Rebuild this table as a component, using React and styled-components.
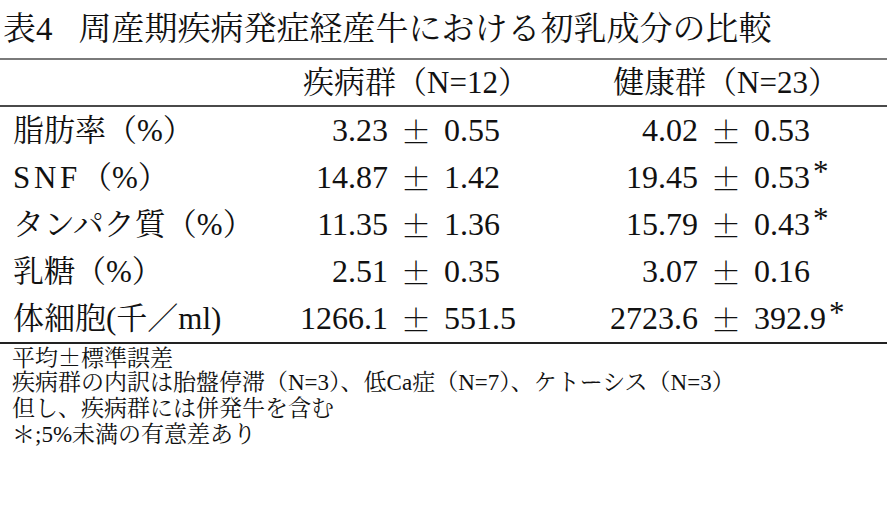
import React from "react";
import styled, { createGlobalStyle } from "styled-components";

const Global = createGlobalStyle`
  html, body { margin: 0; padding: 0; background: #fff; }
  body {
    font-family: "Liberation Serif", "Noto Serif CJK JP", "Noto Sans CJK JP", serif;
    color: #111;
  }
`;

const Page = styled.div`
  width: 887px;
  height: 514px;
  overflow: hidden;
  background: #fff;
`;

const Title = styled.div`
  height: 58px;
  line-height: 58px;
  font-size: 33px;
  padding-left: 3px;
  white-space: nowrap;
  border-bottom: 2px solid #7a7a7a;
`;

const Gap = styled.span`
  display: inline-block;
  width: 26px;
`;

const Table = styled.div`
  display: grid;
  grid-template-columns: 261px 127px 56px 127px 127px 56px 127px 1fr;
  border-bottom: 2px solid #222;
`;

const HeaderCell = styled.div`
  grid-column: ${(p) => p.$span};
  height: 45px;
  line-height: 45px;
  font-size: 31px;
  text-align: center;
  white-space: nowrap;
  border-bottom: 2px solid #4a4a4a;
`;

const HeaderFill = styled.div`
  grid-column: ${(p) => p.$span};
  border-bottom: 2px solid #4a4a4a;
`;

const Cell = styled.div`
  height: 47px;
  line-height: 47px;
  font-size: ${(p) => (p.$num ? "32px" : "31px")};
  white-space: nowrap;
  text-align: ${(p) => p.$align || "left"};
  padding-left: ${(p) => (p.$label ? "13px" : "0")};
`;

const PlusMinus = styled(Cell)`
  font-family: "Noto Serif CJK JP", "Noto Sans CJK JP", serif;
  font-size: 30px;
  text-align: center;
`;

const Latin = styled.span`
  letter-spacing: 0.12em;
`;

const Star = styled.span`
  font-size: 31px;
  position: relative;
  top: -6px;
  margin-left: 3px;
`;

const Notes = styled.div`
  padding-left: 12px;
  font-size: 23px;
`;

const Note = styled.div`
  height: 26px;
  line-height: 26px;
  white-space: nowrap;
`;

const Cjk = styled.span`
  font-family: "Noto Serif CJK JP", "Noto Sans CJK JP", serif;
`;

const rows = [
  { label: "脂肪率（%）", a: ["3.23", "0.55"], b: ["4.02", "0.53"], star: false },
  { label: <><Latin>SNF</Latin>（%）</>, a: ["14.87", "1.42"], b: ["19.45", "0.53"], star: true },
  { label: "タンパク質（%）", a: ["11.35", "1.36"], b: ["15.79", "0.43"], star: true },
  { label: "乳糖（%）", a: ["2.51", "0.35"], b: ["3.07", "0.16"], star: false },
  { label: "体細胞(千／ml)", a: ["1266.1", "551.5"], b: ["2723.6", "392.9"], star: true },
];

export default function App() {
  return (
    <Page>
      <Global />
      <Title>表4<Gap />周産期疾病発症経産牛における初乳成分の比較</Title>
      <Table>
        <HeaderFill $span="1 / 2" />
        <HeaderCell $span="2 / 5">疾病群（N=12）</HeaderCell>
        <HeaderCell $span="5 / 8">健康群（N=23）</HeaderCell>
        <HeaderFill $span="8 / 9" />
        {rows.map((r, i) => (
          <React.Fragment key={i}>
            <Cell $label>{r.label}</Cell>
            <Cell $num $align="right">{r.a[0]}</Cell>
            <PlusMinus>±</PlusMinus>
            <Cell $num>{r.a[1]}</Cell>
            <Cell $num $align="right">{r.b[0]}</Cell>
            <PlusMinus>±</PlusMinus>
            <Cell $num>
              {r.b[1]}
              {r.star && <Star>*</Star>}
            </Cell>
            <Cell />
          </React.Fragment>
        ))}
      </Table>
      <Notes>
        <Note>平均<Cjk>±</Cjk>標準誤差</Note>
        <Note>疾病群の内訳は胎盤停滞（N=3）、低Ca症（N=7）、ケトーシス（N=3）</Note>
        <Note>但し、疾病群には併発牛を含む</Note>
        <Note>＊;5%未満の有意差あり</Note>
      </Notes>
    </Page>
  );
}
